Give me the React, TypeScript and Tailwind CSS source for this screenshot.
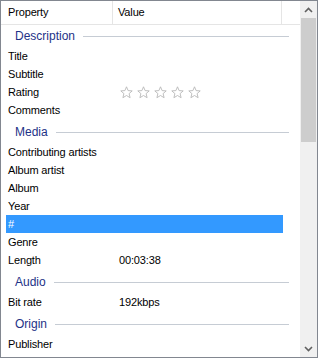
import React from "react";

type Row = { name: string; value?: string; stars?: boolean; selected?: boolean };
type Group = { title: string; rows: Row[] };

const groups: Group[] = [
  {
    title: "Description",
    rows: [
      { name: "Title" },
      { name: "Subtitle" },
      { name: "Rating", stars: true },
      { name: "Comments" },
    ],
  },
  {
    title: "Media",
    rows: [
      { name: "Contributing artists" },
      { name: "Album artist" },
      { name: "Album" },
      { name: "Year" },
      { name: "#", selected: true },
      { name: "Genre" },
      { name: "Length", value: "00:03:38" },
    ],
  },
  {
    title: "Audio",
    rows: [{ name: "Bit rate", value: "192kbps" }],
  },
  {
    title: "Origin",
    rows: [{ name: "Publisher" }],
  },
];

const Star = () => (
  <svg width="13" height="13" viewBox="0 0 13 13">
    <path
      d="M6.5 0.8 L8.1 4.6 L12.2 4.9 L9.1 7.6 L10.1 11.7 L6.5 9.5 L2.9 11.7 L3.9 7.6 L0.8 4.9 L4.9 4.6 Z"
      fill="#ffffff"
      stroke="#b8b8b8"
      strokeWidth="0.9"
      strokeLinejoin="round"
    />
  </svg>
);

const Chevron = ({ up }: { up?: boolean }) => (
  <svg width="9" height="6" viewBox="0 0 9 6">
    <path
      d={up ? "M1 5 L4.5 1.5 L8 5" : "M1 1 L4.5 4.5 L8 1"}
      fill="none"
      stroke="#606060"
      strokeWidth="1.6"
    />
  </svg>
);

const PropertyRow = ({ row }: { row: Row }) => (
  <div
    className={
      row.selected
        ? "ml-[5px] flex h-[18px] w-[277px] items-center bg-[#3399ff] text-white"
        : "ml-[5px] flex h-[18px] w-[277px] items-center text-black"
    }
  >
    <span className="w-[112px] shrink-0 pl-[2px]">{row.name}</span>
    {row.stars ? (
      <div className="ml-[2px] flex gap-[4px] pt-[1px]">
        <Star />
        <Star />
        <Star />
        <Star />
        <Star />
      </div>
    ) : (
      <span className="pl-[1px]">{row.value}</span>
    )}
  </div>
);

export default function App() {
  return (
    <div className="flex h-[358px] w-[318px] overflow-hidden border border-[#828790] bg-white font-['Liberation_Sans',Arial,sans-serif] text-[11px] tracking-[-0.15px]">
      <div className="flex w-[299px] flex-col">
        {/* column header */}
        <div className="flex h-[24px] shrink-0 border-b border-[#e5e5e5] text-black">
          <div className="flex w-[112px] items-center border-r border-[#e5e5e5] pl-[7px]">Property</div>
          <div className="flex w-[169px] items-center border-r border-[#e5e5e5] pl-[5px]">Value</div>
          <div className="flex-1" />
        </div>

        {groups.map((g, i) => (
          <div key={g.title} className={i === 0 ? "" : "mt-[2px]"}>
            <div className="flex h-[22px] items-center pl-[14px] pr-[11px]">
              <span className="text-[12px] tracking-normal text-[#1e3287]">{g.title}</span>
              <div className="ml-[8px] h-px flex-1 bg-[#c6ccd4]" />
            </div>
            {g.rows.map((r) => (
              <PropertyRow key={r.name} row={r} />
            ))}
          </div>
        ))}
      </div>

      {/* scrollbar */}
      <div className="flex w-[17px] flex-col bg-[#f0f0f0]">
        <div className="flex h-[17px] items-center justify-center">
          <Chevron up />
        </div>
        <div className="mx-[1px] h-[124px] bg-[#cdcdcd]" />
        <div className="flex-1" />
        <div className="flex h-[17px] items-center justify-center">
          <Chevron />
        </div>
      </div>
    </div>
  );
}
